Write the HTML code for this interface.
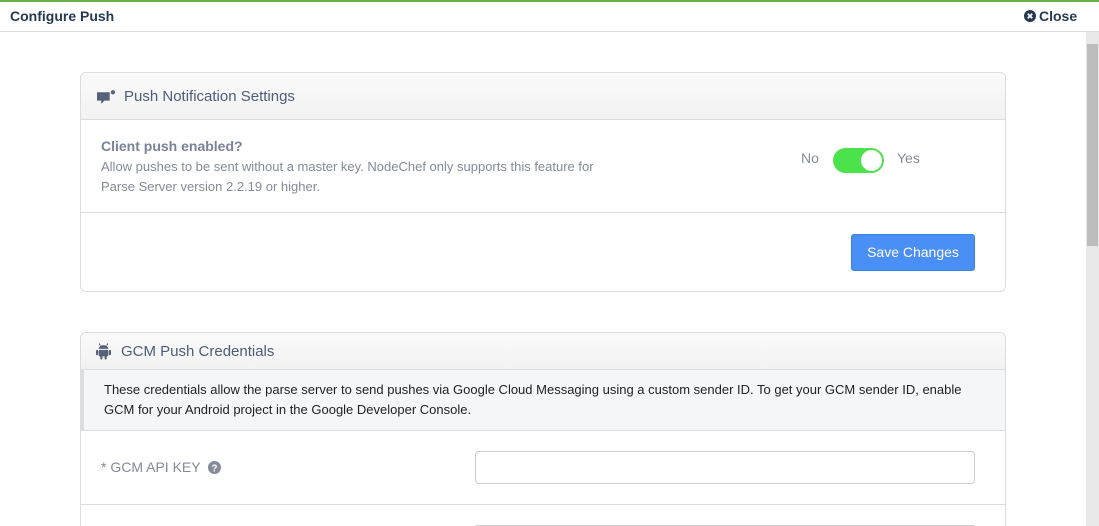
<!DOCTYPE html>
<html><head><meta charset="utf-8"><style>
*{box-sizing:border-box;margin:0;padding:0}
html,body{width:1099px;height:526px;overflow:hidden}
body{background:#fff;font-family:"Liberation Sans",Arial,sans-serif;position:relative}
.top{position:absolute;left:0;top:0;width:1099px;height:32px;border-top:2px solid #6ab04c;border-bottom:1px solid #ddd;background:#fff}
.top .t{position:absolute;left:10px;top:6px;font-size:14px;font-weight:bold;color:#253a52}
.top .c{position:absolute;left:1024px;top:6px;font-size:14px;font-weight:bold;color:#253a52}
.sb{position:absolute;left:1086px;top:32px;width:13px;height:494px;background:#e8e8e8}
.sb .th{position:absolute;left:1px;top:12px;width:11px;height:202px;background:#bcbcbc}
.panel{position:absolute;left:80px;width:926px;border:1px solid #ddd;border-radius:6px;background:#fff;overflow:hidden}
.ph{height:47px;background:linear-gradient(#fafafa,#f2f2f2);border-bottom:1px solid #ddd;font-size:15px;color:#4e5d78;padding:15px 0 0 43px;position:relative}
.muted{color:#858a99}
</style></head><body>
<div class="top"><div class="t">Configure Push</div>
<div class="c"><svg width="12" height="12" viewBox="0 0 12 12" style="vertical-align:-1px;margin-right:3px"><circle cx="6" cy="6" r="6" fill="#253a52"/><path d="M3.8 3.8L8.2 8.2M8.2 3.8L3.8 8.2" stroke="#fff" stroke-width="1.8"/></svg>Close</div></div>
<div class="sb"><div class="th"></div></div>

<div class="panel" style="top:72px;height:220px">
 <div class="ph"><svg width="18" height="15" viewBox="0 0 17 14" style="position:absolute;left:16px;top:17px"><path d="M0 2h12v8H7l-3 3v-3H0z" fill="#56627a"/><circle cx="15" cy="2" r="2" fill="#56627a"/></svg>Push Notification Settings</div>
 <div style="height:93px;border-bottom:1px solid #ddd;position:relative">
  <div style="position:absolute;left:20px;top:18px;font-size:14px;font-weight:bold;color:#7a8297">Client push enabled?</div>
  <div style="position:absolute;left:20px;top:37px;font-size:13px;line-height:20px;color:#858a99;width:515px">Allow pushes to be sent without a master key. NodeChef only supports this feature for Parse Server version 2.2.19 or higher.</div>
  <div style="position:absolute;left:720px;top:30px;font-size:14px" class="muted">No</div>
  <div style="position:absolute;left:752px;top:28px;width:51px;height:25px;border-radius:13px;background:#4ce24c"><div style="position:absolute;right:2px;top:2px;width:21px;height:21px;border-radius:50%;background:#fff"></div></div>
  <div style="position:absolute;left:816px;top:30px;font-size:14px" class="muted">Yes</div>
 </div>
 <div style="position:absolute;left:770px;top:161px;width:124px;height:37px;background:#4a8ff5;border:1px solid #3b7fe0;border-radius:3px;color:#fff;font-size:14px;text-align:center;line-height:35px">Save Changes</div>
</div>

<div class="panel" style="top:332px;height:194px;border-radius:6px 6px 0 0;border-bottom:none">
 <div class="ph" style="height:37px;padding-top:10px;padding-left:40px"><svg width="15" height="18" viewBox="0 0 14 16" style="position:absolute;left:15px;top:9px"><path d="M3 1l1 2M11 1l-1 2" stroke="#56627a"/><path d="M2.5 6a4.5 3.5 0 0 1 9 0z" fill="#56627a"/><rect x="2.5" y="7" width="9" height="6" rx="1" fill="#56627a"/><rect x="0" y="7" width="2" height="5" rx="1" fill="#56627a"/><rect x="12" y="7" width="2" height="5" rx="1" fill="#56627a"/><rect x="4" y="12" width="2" height="4" rx="1" fill="#56627a"/><rect x="8" y="12" width="2" height="4" rx="1" fill="#56627a"/></svg>GCM Push Credentials</div>
 <div style="height:61px;background:#f5f6f8;border-left:3px solid #ddd;border-bottom:1px solid #ddd;padding:10px 20px 0 20px;font-size:13px;line-height:20px;color:#222">These credentials allow the parse server to send pushes via Google Cloud Messaging using a custom sender ID. To get your GCM sender ID, enable<br>GCM for your Android project in the Google Developer Console.</div>
 <div style="height:74px;border-bottom:1px solid #ddd;position:relative">
  <div style="position:absolute;left:20px;top:28px;font-size:14px" class="muted">* GCM API KEY <svg width="13" height="13" viewBox="0 0 12 12" style="vertical-align:-2px;margin-left:4px"><circle cx="6" cy="6" r="6" fill="#858a99"/><text x="6" y="9.5" font-size="9" font-weight="bold" fill="#fff" text-anchor="middle" font-family="Liberation Sans">?</text></svg></div>
  <div style="position:absolute;left:394px;top:20px;width:500px;height:33px;border:1px solid #ccc;border-radius:4px"></div>
 </div>
 <div style="position:absolute;left:394px;top:192px;width:500px;height:2px;border-top:1px solid #ccc;border-radius:4px 4px 0 0"></div>
</div>
</body></html>
